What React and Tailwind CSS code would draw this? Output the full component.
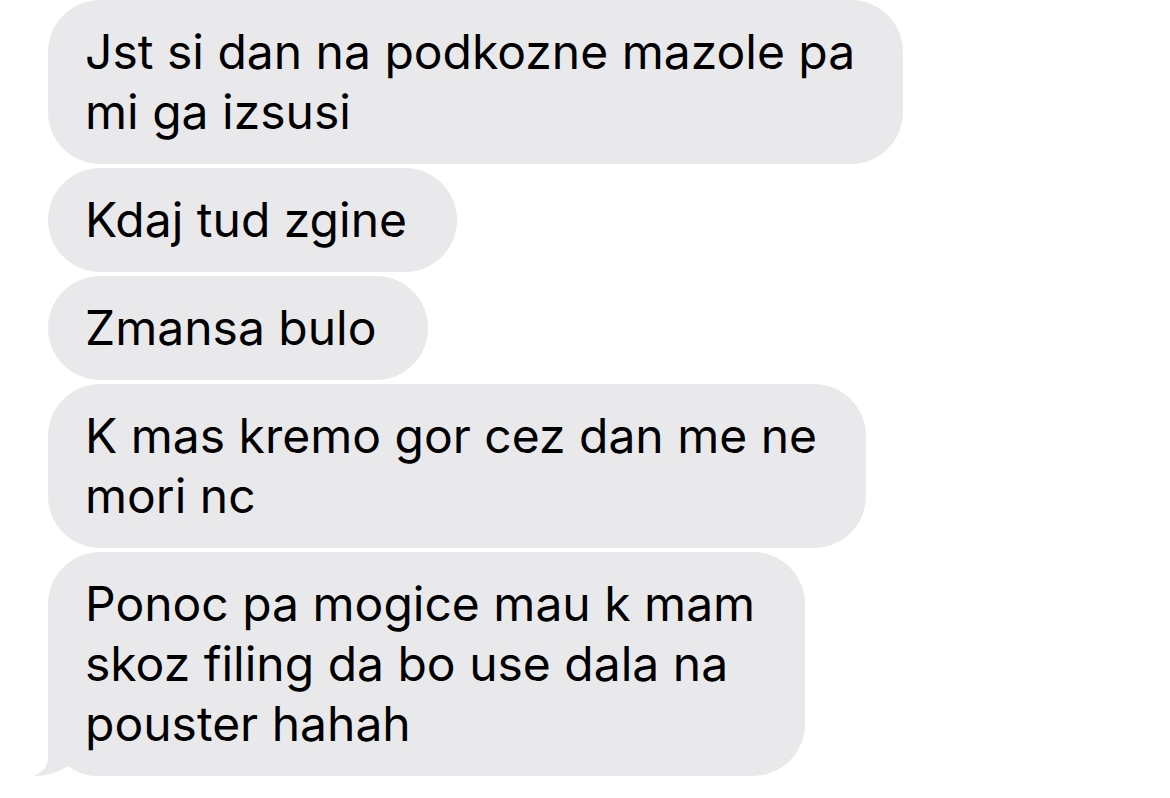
export default function App() {
  const bubbles = [
    { w: "w-[855px]", lines: ["Jst si dan na podkozne mazole pa", "mi ga izsusi"] },
    { w: "w-[409px]", lines: ["Kdaj tud zgine"] },
    { w: "w-[380px]", lines: ["Zmansa bulo"] },
    { w: "w-[818px]", lines: ["K mas kremo gor cez dan me ne", "mori nc"] },
    { w: "w-[757px]", lines: ["Ponoc pa mogice mau k mam", "skoz filing da bo use dala na", "pouster hahah"], tail: true },
  ];
  return (
    <div className="w-[1170px] h-[798px] bg-white overflow-hidden" style={{ fontFamily: "Inter, 'Noto Sans', sans-serif" }}>
      <div className="flex flex-col items-start gap-[4px] pl-[48px] pt-0">
        {bubbles.map((b, i) => (
          <div key={i} className={`relative ${b.w} bg-[#e9e9eb] rounded-[52px] pl-[37px] py-[22px] text-[48px] leading-[60px] text-black`}>
            {b.tail && (
              <svg className="absolute left-[-16px] bottom-0" width="70" height="56" viewBox="0 0 70 56">
                <path d="M16 0 L16 37 C16 47 10 53 1 56 Q22 56 36 46 Q48 56 66 56 L70 56 L70 0 Z" fill="#e9e9eb" />
              </svg>
            )}
            {b.lines.map((l, j) => (
              <div key={j} className="relative whitespace-nowrap">{l}</div>
            ))}
          </div>
        ))}
      </div>
    </div>
  );
}
